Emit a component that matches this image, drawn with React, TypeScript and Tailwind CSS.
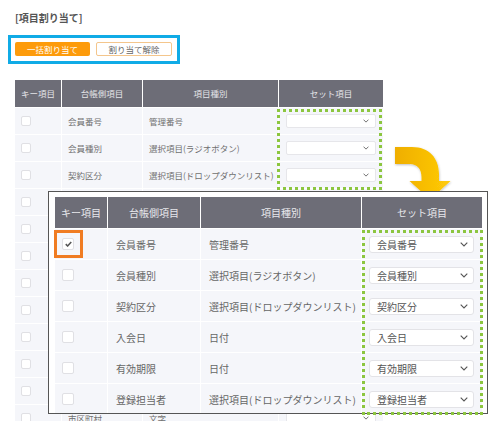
import React from "react";

const backRows: [string, string][] = [
  ["会員番号", "管理番号"],
  ["会員種別", "選択項目(ラジオボタン)"],
  ["契約区分", "選択項目(ドロップダウンリスト)"],
  ["", ""],
  ["", ""],
  ["", ""],
  ["", ""],
  ["", ""],
  ["", ""],
  ["", ""],
  ["", ""],
  ["市区町村", "文字"],
];

const frontRows: [string, string, string][] = [
  ["会員番号", "管理番号", "会員番号"],
  ["会員種別", "選択項目(ラジオボタン)", "会員種別"],
  ["契約区分", "選択項目(ドロップダウンリスト)", "契約区分"],
  ["入会日", "日付", "入会日"],
  ["有効期限", "日付", "有効期限"],
  ["登録担当者", "選択項目(ドロップダウンリスト)", "登録担当者"],
];

function Chevron({ w, h }: { w: number; h: number }) {
  return (
    <svg width={w} height={h} viewBox="0 0 8 5" className="shrink-0">
      <polyline points="0.7,0.7 4,4 7.3,0.7" fill="none" stroke="#555" strokeWidth="1.1" />
    </svg>
  );
}

export default function App() {
  return (
    <div className="relative w-[503px] h-[421px] overflow-hidden bg-white font-['Noto_Sans_CJK_JP','Noto_Sans',sans-serif]">
      <div className="pt-[12px]">
        <div className="pl-[15px] text-[10px] leading-[12px] font-bold text-[#555]">[項目割り当て]</div>

        <div className="ml-[8px] mt-[11px] w-[172px] h-[29px] border-[3px] border-[#10abe6] flex items-start gap-[6px] pl-[4px] pt-[4px]">
          <div className="w-[75px] h-[14px] rounded-[2px] bg-[#fd9b0b] text-white text-[8.5px] leading-[14px] text-center">一括割り当て</div>
          <div className="w-[76px] h-[14px] rounded-[2px] bg-white border border-[#f4c68c] text-[#666] text-[8.5px] leading-[12px] text-center">割り当て解除</div>
        </div>

        <div className="ml-[15px] mt-[16px] w-[368px] grid grid-cols-[46px_80px_135px_104px] gap-px bg-white">
          {["キー項目", "台帳側項目", "項目種別", "セット項目"].map((h) => (
            <div key={h} className="h-[27px] bg-[#6d6d77] text-[#e4e4e8] text-[8.5px] flex items-center justify-center">
              {h}
            </div>
          ))}
          {backRows.map(([a, b], i) => (
            <React.Fragment key={i}>
              <div className="h-[26px] bg-[#f5f6fa] flex items-center pl-[6px]">
                <div className="w-[10px] h-[10px] bg-white border border-[#e0e0e4] rounded-[2px]" />
              </div>
              <div className="h-[26px] bg-[#f5f6fa] flex items-center pl-[6px] text-[8.5px] text-[#707070] whitespace-nowrap">{a}</div>
              <div className="h-[26px] bg-[#f5f6fa] flex items-center pl-[6px] text-[8.5px] text-[#707070] whitespace-nowrap">{b}</div>
              <div className="h-[26px] bg-[#f5f6fa] flex items-center pl-[7px]">
                <div className="w-[90px] h-[14px] bg-white border border-[#e6e6ea] rounded-[2px] flex items-center justify-end pr-[6px]">
                  <Chevron w={6} h={4} />
                </div>
              </div>
            </React.Fragment>
          ))}
        </div>
      </div>

      {/* back green dotted highlight */}
      <div className="absolute left-[277px] top-[109px] w-[105px] h-[81px] border-[3px] border-dotted border-[#8cc63f]" />

      {/* curved arrow */}
      <svg className="absolute left-[390px] top-[143px]" width="65" height="62" viewBox="390 143 65 62">
        <defs>
          <linearGradient id="ag" x1="0" y1="0" x2="1" y2="0">
            <stop offset="0" stopColor="#efae00" />
            <stop offset="1" stopColor="#ffcb08" />
          </linearGradient>
          <filter id="sh" x="-20%" y="-20%" width="140%" height="140%">
            <feDropShadow dx="0.5" dy="1" stdDeviation="0.8" floodColor="#000" floodOpacity="0.25" />
          </filter>
        </defs>
        <path
          d="M395,147 L412,147 C429,147 439,158 439,174 L439,181 L450.5,181 L430,199.5 L409.5,181 L421.5,181 L421.5,177 C421.5,169 417,164 410,164 L395,164 Z"
          fill="url(#ag)"
          filter="url(#sh)"
        />
      </svg>

      {/* front callout table */}
      <div className="absolute left-[48px] top-[191px] w-[440px] h-[223px] border border-[#555] bg-white overflow-hidden pt-[5px] pl-[6px]">
        <div className="w-[427px] grid grid-cols-[52px_92px_160px_120px] gap-px bg-white">
          {["キー項目", "台帳側項目", "項目種別", "セット項目"].map((h) => (
            <div key={h} className="h-[31px] bg-[#6d6d77] text-[#e8e8ec] text-[10px] flex items-center justify-center">
              {h}
            </div>
          ))}
          {frontRows.map(([a, b, c], i) => (
            <React.Fragment key={i}>
              <div className="h-[30px] bg-[#f5f6fa] flex items-center pl-[7px]">
                <div className="w-[12px] h-[12px] bg-white border border-[#e0e0e4] rounded-[2px] flex items-center justify-center">
                  {i === 0 && (
                    <svg width="7" height="6" viewBox="0 0 8 7">
                      <path d="M0.8,3.6 L3,5.8 L7.2,1.2" fill="none" stroke="#555" strokeWidth="1.8" />
                    </svg>
                  )}
                </div>
              </div>
              <div className="h-[30px] bg-[#f5f6fa] flex items-center pl-[8px] text-[10px] text-[#666] whitespace-nowrap">{a}</div>
              <div className="h-[30px] bg-[#f5f6fa] flex items-center pl-[8px] text-[10px] text-[#666] whitespace-nowrap">{b}</div>
              <div className="h-[30px] bg-[#f5f6fa] flex items-center pl-[7px]">
                <div className="w-[105px] h-[17px] bg-white border border-[#e3e3e7] rounded-[3px] flex items-center justify-between pl-[7px] pr-[5px] text-[10px] text-[#555] whitespace-nowrap">
                  <span>{c}</span>
                  <Chevron w={8} h={5} />
                </div>
              </div>
            </React.Fragment>
          ))}
        </div>
      </div>

      {/* front green dotted highlight */}
      <div className="absolute left-[362px] top-[230px] w-[121px] h-[185px] border-[3px] border-dotted border-[#8cc63f]" />

      {/* orange checkbox highlight */}
      <div className="absolute left-[54px] top-[230px] w-[29px] h-[28px] border-[3px] border-[#f07c22]" />
    </div>
  );
}
